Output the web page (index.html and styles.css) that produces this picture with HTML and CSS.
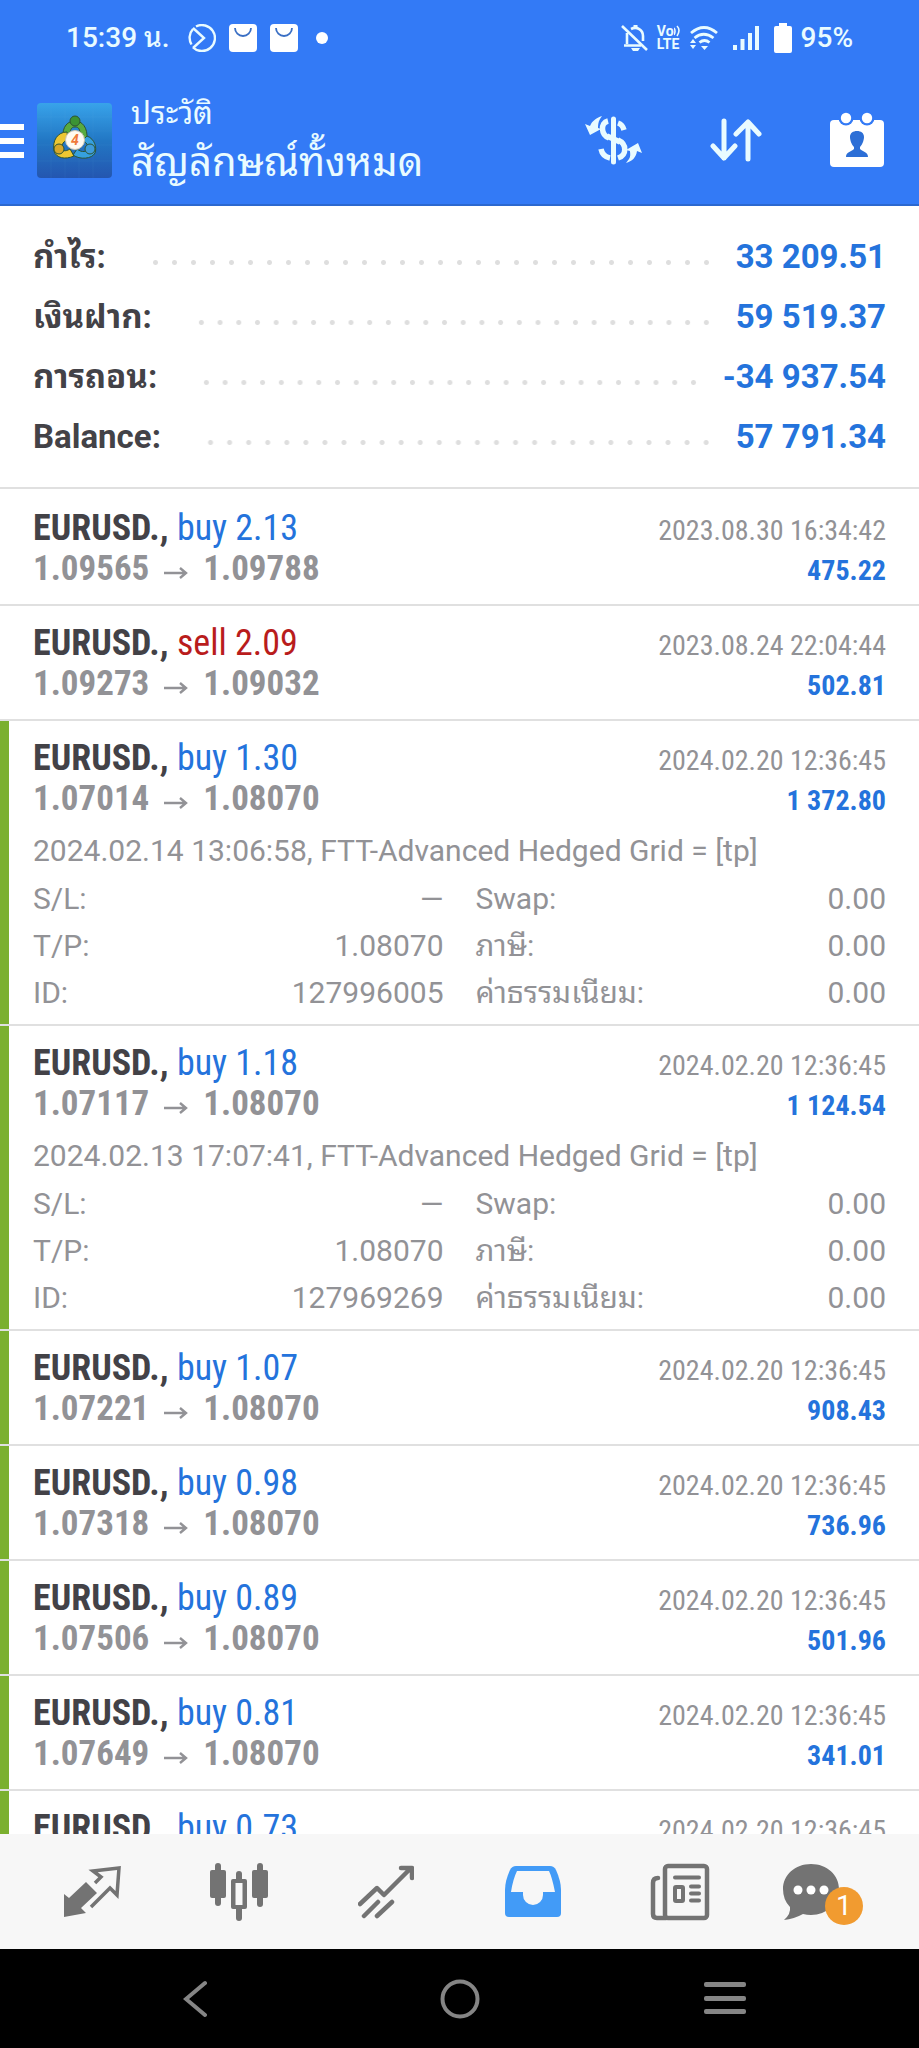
FILE: index.html
```html
<!DOCTYPE html>
<html lang="th">
<head>
<meta charset="utf-8">
<meta name="viewport" content="width=device-width, initial-scale=1">
<title>ประวัติ</title>
<link rel="stylesheet" href="styles.css">
</head>
<body>
<svg class="defs" aria-hidden="true">
  <symbol id="to" viewBox="0 0 24 14"><path d="M0 7H22M16 2l6 5-6 5" fill="none" stroke="currentColor" stroke-width="2.4"/></symbol>
  <symbol id="bag" viewBox="0 0 28 28"><rect width="28" height="28" rx="4" fill="#fff"/><path d="M6 4a8 8 0 0 0 16 0" fill="none" stroke="#3a6fc4" stroke-width="1.8"/></symbol>
</svg>
<header class="top">
  <div class="status">
    <div class="status-group">
      <span class="clock">15:39 น.</span>
      <svg width="28" height="28" viewBox="0 0 28 28" fill="none" stroke="#e9fbff" stroke-width="2.4"><path d="M8 2.5A13 13 0 1 1 5 23.500M3.500 20.500A13 13 0 0 1 5 5"/><path d="M5 4l11 10L5 24"/></svg>
      <svg width="28" height="28"><use href="#bag"/></svg>
      <svg width="28" height="28"><use href="#bag"/></svg>
      <span class="more-dot"></span>
    </div>
    <div class="status-group right">
      <svg width="27" height="28" viewBox="0 0 27 28" fill="none" stroke="#e9fbff" stroke-width="2.600"><path d="M1 2l25 24"/><path d="M6 9v11M3 21.500h17M10 5c6-3 12 1 12 7v5"/><path d="M14.500 1v4" stroke-width="4"/><path d="M10 24h9l-2 3h-5z" fill="#e9fbff" stroke="none"/></svg>
      <span class="volte"><span>Vo<svg width="7" height="12" viewBox="0 0 7 12" fill="none" stroke="#e9fbff" stroke-width="1.600"><path d="M0 3q2 3 0 7M3 1q4 4 0 10"/></svg></span><span>LTE</span></span>
      <svg width="28" height="26" viewBox="0 0 28 26" fill="none" stroke="#e9fbff" stroke-width="2.800"><path d="M1 8q13-11 26 0M4.500 13q9-7.500 19 0M9.500 17.500q5-4 10 0"/><path d="M11 21h7l-3.500 4zM0 18l3-4 3 4zM0 20l3 4 3-4z" fill="#e9fbff" stroke="none"/></svg>
      <svg class="signal" width="26" height="24" viewBox="0 0 26 24" fill="#e9fbff"><path d="M0 19h4v5H0zM7.500 13h4v11h-4zM15 7h4v17h-4zM22 0h4v24h-4z"/></svg>
      <svg class="battery" width="18" height="30" viewBox="0 0 18 30" fill="#fff"><path d="M5 0h8v3h3a2 2 0 0 1 2 2v23a2 2 0 0 1-2 2H2a2 2 0 0 1-2-2V5a2 2 0 0 1 2-2h3z"/></svg>
      <span class="clock">95%</span>
    </div>
  </div>
  <div class="appbar">
    <button class="icon-btn menu" aria-label="เมนู"><svg width="24" height="34" viewBox="0 0 24 34" fill="#fff"><path d="M0 0h24v6H0zM0 14h24v6H0zM0 28h24v6H0z"/></svg></button>
    <svg class="logo" width="75" height="75" viewBox="0 0 75 75">
      <defs><linearGradient id="lg" x1="0" y1="0" x2="0" y2="1"><stop offset="0" stop-color="#38a3ea"/><stop offset=".5" stop-color="#2277c4"/><stop offset="1" stop-color="#2456b0"/></linearGradient></defs>
      <rect width="75" height="75" rx="4" fill="url(#lg)"/>
      <path d="M14 0v75M28 0v75M42 0v75M56 0v75M0 14h75M0 28h75M0 42h75M0 58h75" stroke="#6fc0ee" stroke-opacity=".08"/>
      <g stroke="#2d5434" stroke-width="1">
        <path d="M26 35C25 23 31 18 38 18s13 6 12 19l-7-4c0-7-1-9-5-9s-5 3-5 9z" fill="#58aa3f"/>
        <path d="M30 29C21 29 15 37 17 48c2 7 11 9 20 5l-4-7c-5 3-8 2-8-2s3-7 6-7z" fill="#edc733"/>
        <path d="M50 33c8 3 10 12 8 17-3 6-15 7-22 2l4-6c5 4 10 3 11-1 0-4-3-7-6-7z" fill="#36a0de"/>
        <circle cx="38" cy="18" r="5" fill="#3b9334"/><circle cx="22" cy="46" r="5" fill="#d8a829"/><circle cx="53" cy="46" r="5" fill="#3e9bda"/>
      </g>
      <circle cx="38" cy="37" r="9.500" fill="#fffaf1" stroke="#c8c4b4"/>
      <text x="38" y="42" class="logo-num">4</text>
    </svg>
    <div class="titles"><p class="kicker">ประวัติ</p><h1>สัญลักษณ์ทั้งหมด</h1></div>
    <div class="actions">
      <button class="icon-btn" aria-label="สกุลเงิน"><svg width="58" height="50" viewBox="0 0 58 50" fill="none" stroke="#e9fbff"><path d="M28.500 4v43" stroke-width="5" stroke-linecap="round"/><path d="M23 6c-8 2-7 14 1 17M33 8c3 1 5 3 6 7M16 34c1 5 4 8 9 9M33 25c9 4 9 15 0 18" stroke-width="5.500"/><path d="M22 21l13 6" stroke-width="5.500"/><path d="M0 9l5 2C7 6 11 3 17 1l-2 3c-2 3-2 7-2 9l3 1-11 6zM57 38l-5-2c-1 7-5 10-11 12l3-4c2-3 1-6 1-8l-4-1 12-7z" fill="#e9fbff" stroke="none"/></svg></button>
      <button class="icon-btn" aria-label="เรียงลำดับ"><svg width="52" height="44" viewBox="0 0 52 44" fill="none" stroke="#e9fbff" stroke-width="5" stroke-linecap="round" stroke-linejoin="round"><path d="M14 3v37M3 28l11 12 11-12M38 41V4M26 16L38 4l11 12"/></svg></button>
      <button class="icon-btn" aria-label="ช่วงเวลา"><svg width="56" height="56" viewBox="0 0 56 56"><rect x="1" y="8" width="54" height="47" rx="4" fill="#fff"/><circle cx="17" cy="6" r="7.500" fill="#337af6"/><circle cx="38" cy="6" r="7.500" fill="#337af6"/><circle cx="17" cy="6" r="5.200" fill="#fff"/><circle cx="38" cy="6" r="5.200" fill="#fff"/><path d="M17 45c0-5 5-5 8-8v-2c-3-3-4-8-4-10 0-4 3-6 7-6s7 2 7 6c0 2-1 7-4 10v2c3 3 8 3 8 8z" fill="#2d6fd6"/></svg></button>
    </div>
  </div>
</header>
<main>
  <dl class="summary">
    <div><dt>กำไร:</dt><dd><span class="dots"></span>33 209.51</dd></div>
    <div><dt>เงินฝาก:</dt><dd><span class="dots"></span>59 519.37</dd></div>
    <div><dt>การถอน:</dt><dd><span class="dots"></span>-34 937.54</dd></div>
    <div><dt>Balance:</dt><dd><span class="dots"></span>57 791.34</dd></div>
  </dl>
  <ul class="deals">
    <li class="deal">
      <div class="line"><span class="symbol">EURUSD., <b class="buy">buy 2.13</b></span><time>2023.08.30 16:34:42</time></div>
      <div class="line"><span class="price">1.09565<svg class="to"><use href="#to"/></svg>1.09788</span><span class="profit">475.22</span></div>
    </li>
    <li class="deal">
      <div class="line"><span class="symbol">EURUSD., <b class="sell">sell 2.09</b></span><time>2023.08.24 22:04:44</time></div>
      <div class="line"><span class="price">1.09273<svg class="to"><use href="#to"/></svg>1.09032</span><span class="profit">502.81</span></div>
    </li>
    <li class="deal marked open">
      <div class="line"><span class="symbol">EURUSD., <b class="buy">buy 1.30</b></span><time>2024.02.20 12:36:45</time></div>
      <div class="line"><span class="price">1.07014<svg class="to"><use href="#to"/></svg>1.08070</span><span class="profit">1 372.80</span></div>
      <p class="comment">2024.02.14 13:06:58, FTT-Advanced Hedged Grid = [tp]</p>
      <dl class="details">
        <div><dt>S/L:</dt><dd>—</dd></div><div><dt>Swap:</dt><dd>0.00</dd></div>
        <div><dt>T/P:</dt><dd>1.08070</dd></div><div><dt>ภาษี:</dt><dd>0.00</dd></div>
        <div><dt>ID:</dt><dd>127996005</dd></div><div><dt>ค่าธรรมเนียม:</dt><dd>0.00</dd></div>
      </dl>
    </li>
    <li class="deal marked open">
      <div class="line"><span class="symbol">EURUSD., <b class="buy">buy 1.18</b></span><time>2024.02.20 12:36:45</time></div>
      <div class="line"><span class="price">1.07117<svg class="to"><use href="#to"/></svg>1.08070</span><span class="profit">1 124.54</span></div>
      <p class="comment">2024.02.13 17:07:41, FTT-Advanced Hedged Grid = [tp]</p>
      <dl class="details">
        <div><dt>S/L:</dt><dd>—</dd></div><div><dt>Swap:</dt><dd>0.00</dd></div>
        <div><dt>T/P:</dt><dd>1.08070</dd></div><div><dt>ภาษี:</dt><dd>0.00</dd></div>
        <div><dt>ID:</dt><dd>127969269</dd></div><div><dt>ค่าธรรมเนียม:</dt><dd>0.00</dd></div>
      </dl>
    </li>
    <li class="deal marked">
      <div class="line"><span class="symbol">EURUSD., <b class="buy">buy 1.07</b></span><time>2024.02.20 12:36:45</time></div>
      <div class="line"><span class="price">1.07221<svg class="to"><use href="#to"/></svg>1.08070</span><span class="profit">908.43</span></div>
    </li>
    <li class="deal marked">
      <div class="line"><span class="symbol">EURUSD., <b class="buy">buy 0.98</b></span><time>2024.02.20 12:36:45</time></div>
      <div class="line"><span class="price">1.07318<svg class="to"><use href="#to"/></svg>1.08070</span><span class="profit">736.96</span></div>
    </li>
    <li class="deal marked">
      <div class="line"><span class="symbol">EURUSD., <b class="buy">buy 0.89</b></span><time>2024.02.20 12:36:45</time></div>
      <div class="line"><span class="price">1.07506<svg class="to"><use href="#to"/></svg>1.08070</span><span class="profit">501.96</span></div>
    </li>
    <li class="deal marked">
      <div class="line"><span class="symbol">EURUSD., <b class="buy">buy 0.81</b></span><time>2024.02.20 12:36:45</time></div>
      <div class="line"><span class="price">1.07649<svg class="to"><use href="#to"/></svg>1.08070</span><span class="profit">341.01</span></div>
    </li>
    <li class="deal marked">
      <div class="line"><span class="symbol">EURUSD., <b class="buy">buy 0.73</b></span><time>2024.02.20 12:36:45</time></div>
    </li>
  </ul>
</main>
<nav class="tabs">
  <button class="icon-btn" aria-label="ราคา"><svg width="58" height="58" viewBox="0 0 58 58"><path d="M1 31l5 4 17-16 11 11-16 15 5 5-22 4z" fill="#737373"/><path d="M32 20l6-6-8-6 26-3-2 27-7-7-19 19" fill="none" stroke="#737373" stroke-width="3.500"/></svg></button>
  <button class="icon-btn" aria-label="กราฟ"><svg width="60" height="58" viewBox="0 0 60 58" fill="#737373"><rect x="1" y="7" width="16" height="28" rx="2"/><rect x="6" width="6" height="43" rx="3"/><rect x="43" y="7" width="16" height="28" rx="2"/><rect x="48" width="6" height="44" rx="3"/><rect x="27" y="8" width="6" height="50" rx="3"/><rect x="22" y="16" width="16" height="30" rx="2"/><rect x="26.500" y="20" width="7" height="22" fill="#f7f7f7"/></svg></button>
  <button class="icon-btn" aria-label="เทรด"><svg width="56" height="56" viewBox="0 0 56 56" fill="none" stroke="#737373" stroke-width="4.500" stroke-linecap="round" stroke-linejoin="round"><path d="M2 40l17-16 7 7L52 5M43 4h11v10M6 52l14-14M19 52l15-14"/></svg></button>
  <button class="icon-btn" aria-label="ประวัติ" aria-current="page"><svg width="58" height="54" viewBox="0 0 58 54"><path d="M12 1h34q4 0 6 4 5 11 5 20v23q0 4-4 4H5q-4 0-4-4V25Q1 16 6 5q2-4 6-4z" fill="#429bf7"/><path d="M13 6h32q3 6 6 21H39v3a10 10 0 0 1-20 0v-3H7Q9 14 13 6z" fill="#f7f7f7"/></svg></button>
  <button class="icon-btn" aria-label="ข่าว"><svg width="60" height="58" viewBox="0 0 60 58" fill="none" stroke="#737373"><rect x="15" y="3" width="42" height="52" rx="3" stroke-width="4.500"/><path d="M8 15q-5 0-5 5v31q0 4 4 4h9" stroke-width="4.500" stroke-linecap="round"/><rect x="25" y="24" width="8" height="14" rx="1" stroke-width="4"/><path d="M25 14.500h24M41 23.500h8M41 30.500h8M41 37.500h8" stroke-width="4" stroke-linecap="round"/></svg></button>
  <button class="icon-btn chat" aria-label="แชท"><svg width="58" height="58" viewBox="0 0 58 58"><path d="M28 1c16 0 28 11 28 25S44 52 28 52q-4 0-8-1-9 5-19 6 7-6 6-13Q0 37 0 26C0 12 12 1 28 1z" fill="#737373"/><g fill="#fff"><circle cx="15" cy="27" r="4.500"/><circle cx="28" cy="27" r="4.500"/><circle cx="41" cy="27" r="4.500"/></g></svg><span class="badge">1</span></button>
</nav>
<nav class="system">
  <button class="icon-btn" aria-label="กลับ"><svg width="24" height="38" viewBox="0 0 24 38" fill="none" stroke="#858585" stroke-width="4" stroke-linecap="round"><path d="M22 3L3 19l19 16"/></svg></button>
  <button class="icon-btn" aria-label="หน้าหลัก"><svg width="40" height="40" viewBox="0 0 40 40" fill="none" stroke="#858585" stroke-width="4"><circle cx="20" cy="20" r="17.500"/></svg></button>
  <button class="icon-btn" aria-label="แอปล่าสุด"><svg width="42" height="34" viewBox="0 0 42 34" fill="#858585"><rect width="42" height="5" rx="2"/><rect y="14" width="42" height="5" rx="2"/><rect y="27" width="42" height="5" rx="2"/></svg></button>
</nav>
</body>
</html>
```
FILE: styles.css
```css
* { box-sizing: border-box; }
body {
  margin: 0;
  height: 100vh;
  display: flex;
  flex-direction: column;
  background: #fff;
  color: #929296;
  font-family: Roboto, "Noto Sans Thai Looped", Loma, Waree, Garuda, "Noto Sans Thai", "Noto Sans", sans-serif;
}
p, h1, ul, dl, dd { margin: 0; padding: 0; }
.defs { position: absolute; width: 0; height: 0; }
svg { display: block; flex: none; }
.icon-btn { border: 0; padding: 0; background: none; display: grid; place-items: center; }

.top { background: #337af6; color: #e9fbff; border-bottom: 2px solid #2c68cf; flex: none; }
.status { display: flex; justify-content: space-between; height: 76px; padding: 0 66px; }
.status-group { display: flex; align-items: center; gap: 13px; }
.status-group.right { gap: 9px; }
.clock { font-size: 28px; line-height: 32px; font-weight: 500; }
.status-group:first-child .clock { margin-right: 5px; }
.signal { margin-left: 6px; }
.battery { margin-left: 6px; }
.more-dot { width: 12px; height: 12px; border-radius: 50%; background: #fff; margin-left: 5px; }
.volte { font-size: 14px; line-height: 13px; font-weight: 700; }
.volte span { display: flex; }

.appbar { display: flex; height: 128px; padding-right: 34px; }
.appbar .menu { width: 24px; margin-top: 1px; }
.logo { margin: 27px 19px 0 13px; }
.logo-num { font: italic 700 14px Roboto, sans-serif; fill: #ef7a3c; text-anchor: middle; }
.titles { padding-top: 18px; }
.kicker { font-size: 31px; line-height: 40px; }
h1 { font-size: 40px; line-height: 57px; font-weight: 400; }
.actions { margin-left: auto; display: flex; align-items: center; gap: 67px; }

main { flex: 1; min-height: 0; overflow: hidden; }
.summary { padding: 21px 33px 20px; border-bottom: 2px solid #e0e0e0; }
.summary div { display: flex; height: 60px; align-items: center; font-size: 33px; line-height: 40px; font-weight: 700; }
.summary dt { color: #434247; }
.summary dd { flex: 1; display: flex; align-items: center; color: #2473dc; }
.dots {
  flex: 1;
  height: 19px;
  margin: 10px 20px 0 40px;
  background: radial-gradient(circle, #dedede 2px, transparent 3px) 0 0 / 19px 19px round;
}

.deals { list-style: none; padding-top: 2px; }
.deal { padding: 17px 33px 15px; border-bottom: 2px solid #e0e0e0; }
.deal.marked { box-shadow: inset 9px 0 #7bb02f; }
.deal.open { padding-bottom: 8px; }
.line {
  display: flex;
  justify-content: space-between;
  align-items: baseline;
  height: 40px;
  line-height: 40px;
  font-family: "Roboto Condensed", Roboto, sans-serif;
}
.line + .line { margin-top: 1px; }
.symbol { font-size: 36px; font-weight: 700; color: #434247; }
.symbol b { font-weight: 400; }
.buy { color: #2473dc; }
.sell { color: #b91c1c; }
.price { display: flex; align-items: baseline; font-size: 35px; font-weight: 700; }
.to { width: 24px; height: 14px; margin: 0 15px; }
time { font-size: 28px; }
.profit { font-size: 28px; font-weight: 700; color: #2473dc; }
.comment { font-size: 30px; line-height: 48px; margin-top: 8px; }
.details { display: grid; grid-template-columns: 1fr 1fr; column-gap: 32px; font-size: 30px; line-height: 47px; }
.details div { display: flex; justify-content: space-between; height: 47px; }

.tabs { flex: none; display: grid; grid-template-columns: repeat(6, 1fr); height: 115px; padding: 0 18px; background: #f7f7f7; }
.tabs .chat { position: relative; grid-template-columns: 88px; justify-content: center; justify-items: start; }
.badge {
  position: absolute;
  left: 71px;
  top: 53px;
  width: 38px;
  height: 38px;
  border-radius: 50%;
  background: #f19b30;
  color: #fff;
  font: 28px/38px Roboto, sans-serif;
}
.system { flex: none; display: grid; grid-template-columns: repeat(3, 1fr); height: 99px; padding: 0 62px; background: #000; }
```
